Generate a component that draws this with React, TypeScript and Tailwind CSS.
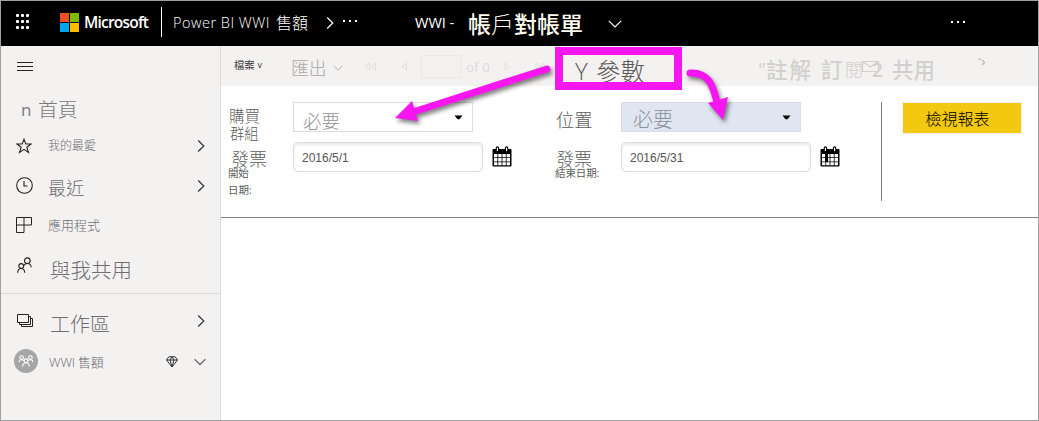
import React from 'react';

const cjk = "font-['Open_Sans','Noto_Sans_CJK_TC',sans-serif]";

function Chevron({ className, dir = 'right' }: { className: string; dir?: 'right' | 'down' }) {
  return (
    <svg className={`shrink-0 ${className}`} viewBox={dir === 'right' ? '0 0 8 12' : '0 0 14 8'} fill="none" stroke="currentColor" strokeWidth="1.2">
      <path d={dir === 'right' ? 'M1.2 .5L6.8 6L1.2 11.5' : 'M.8 .8L7 7L13.2 .8'} />
    </svg>
  );
}

function Dots({ className }: { className: string }) {
  return (
    <span className={`flex shrink-0 gap-[4px] ${className}`}>
      <i className="size-[2px] bg-white" />
      <i className="size-[2px] bg-white" />
      <i className="size-[2px] bg-white" />
    </span>
  );
}

function Header() {
  return (
    <header className="flex h-[45px] shrink-0 bg-black text-white">
      <div className="mt-[13px] ml-[15px] grid h-[15px] w-[15px] shrink-0 grid-cols-3 content-between justify-between">
        {Array.from({ length: 9 }, (_, i) => (
          <i key={i} className="size-[3px] rounded-[1px] bg-white" />
        ))}
      </div>
      <div className="mt-[12px] ml-[29px] grid size-[19px] shrink-0 grid-cols-2 gap-px">
        <i className="bg-[#f25022]" />
        <i className="bg-[#7fba00]" />
        <i className="bg-[#00a4ef]" />
        <i className="bg-[#ffb900]" />
      </div>
      <span className="mt-[8px] ml-[5px] w-[69px] shrink-0 text-[15.5px] leading-[26px] font-semibold tracking-[-0.78px]">Microsoft</span>
      <i className="mt-[6px] ml-[8px] h-[30px] w-px shrink-0 bg-white" />
      <span className="mt-[9px] ml-[11px] flex w-[136px] shrink-0 text-[14px] leading-[26px] font-light whitespace-pre">
        <span className="w-[103px] text-[14.5px] tracking-[0.5px]">Power BI WWI</span>
        <span className="text-[16px]">售額</span>
      </span>
      <Chevron className="mt-[16px] ml-[17px] h-[12px] w-[8px]" />
      <Dots className="mt-[19px] ml-[9px]" />
      <span className="mt-[9px] ml-[58px] w-[53px] shrink-0 text-[14.5px] leading-[26px] whitespace-nowrap">WWI -</span>
      <span className="mt-[8px] flex w-[140px] shrink-0 text-[23px] leading-[30px] font-medium whitespace-nowrap text-[#fffdf0]">
        帳<span className="font-light">戶</span>對帳單
      </span>
      <Chevron dir="down" className="mt-[19px] h-[8px] w-[14px]" />
      <Dots className="mt-[20px] mr-[73px] ml-auto" />
    </header>
  );
}

type NavItem = {
  icon: React.ReactNode;
  label: string;
  text: string;
  row: string;
  arrow?: string;
};

const StarIcon = (
  <svg className="mt-[13px] h-[16px] w-[16px]" viewBox="0 0 16 16" fill="none" stroke="#242424" strokeWidth="1.1">
    <path d="M8 1.2L9.8 6H15L10.8 9.2L12.4 14.4L8 11.3L3.6 14.4L5.2 9.2L1 6H6.2Z" />
  </svg>
);
const ClockIcon = (
  <svg className="mt-[11px] h-[17px] w-[17px]" viewBox="0 0 17 17" fill="none" stroke="#242424" strokeWidth="1.1">
    <circle cx="8.5" cy="8.5" r="7.8" />
    <path d="M8 4V9H11.5" />
  </svg>
);
const AppsIcon = (
  <svg className="mt-[11px] h-[16px] w-[16px]" viewBox="0 0 16 16" fill="none" stroke="#242424" strokeWidth="1">
    <path d="M.5 .5H15.5V8H.5ZM.5 8V15.5H8V.5" />
  </svg>
);
const PeopleIcon = (
  <svg className="mt-[10px] ml-[1px] h-[17px] w-[15px]" viewBox="0 0 15 17" fill="none" stroke="#242424" strokeWidth="1.1">
    <circle cx="10.3" cy="3.7" r="2.8" />
    <circle cx="4.2" cy="9" r="2.4" />
    <path d="M.6 15.8C.8 13 2.3 11.5 4.2 11.5S7.6 13 7.8 15.8M6.7 8.8C7.5 7.3 8.8 6.5 10.3 6.5C12.5 6.5 14 8 14.3 10.3" />
  </svg>
);
const WorkspacesIcon = (
  <svg className="mt-[13px] ml-[1px] h-[14px] w-[17px]" viewBox="0 0 17 14" fill="none" stroke="#242424" strokeWidth="1">
    <path d="M.5 .5H11.5V8.5H.5ZM2.5 8.5V10.5H13.5V2.5H11.5M4.5 10.5V12.5H15.5V4.5H13.5" />
  </svg>
);

const items: NavItem[] = [
  { icon: StarIcon, label: '我的最愛', text: 'ml-[47px] text-[12px] mt-[9px] leading-[24px]', row: 'h-[41px]', arrow: 'mt-[15px]' },
  { icon: ClockIcon, label: '最近', text: 'ml-[47px] text-[18px] mt-[8px] leading-[28px]', row: 'h-[40px]', arrow: 'mt-[14px]' },
  { icon: AppsIcon, label: '應用程式', text: 'ml-[47px] text-[13px] mt-[6px] leading-[26px]', row: 'h-[41px]' },
  { icon: PeopleIcon, label: '與我共用', text: 'ml-[49px] text-[20.5px] mt-[8px] leading-[30px]', row: 'h-[46px]' },
];

function NavRow({ icon, label, text, row, arrow }: NavItem) {
  return (
    <li className={`flex shrink-0 ${row}`}>
      <span className="ml-[15px] w-0 shrink-0">
        <span className="flex w-[18px]">{icon}</span>
      </span>
      <span className="-ml-[15px] flex flex-1">
        <span className={`font-light whitespace-nowrap text-[#706d72] ${text}`}>{label}</span>
      </span>
      {arrow && <Chevron className={`mr-[15px] h-[12px] w-[8px] text-[#303040] ${arrow}`} />}
    </li>
  );
}

function Sidebar() {
  return (
    <nav className="flex w-[220px] shrink-0 flex-col border-r border-[#dcdcdc] bg-[#f3f2f1]">
      <div className="mt-[16px] ml-[16px] flex h-[9px] w-[16px] shrink-0 flex-col justify-between">
        <i className="h-px bg-[#242424]" />
        <i className="h-px bg-[#242424]" />
        <i className="h-px bg-[#242424]" />
      </div>
      <div className="flex h-[54px] shrink-0 pt-[23px] text-[#7a777d]">
        <span className="ml-[20px] w-[17px] text-[17px] leading-[32px]">n</span>
        <span className="text-[19.8px] leading-[32px] font-light">首頁</span>
      </div>
      <ul className="flex flex-col">
        {items.map((it) => (
          <NavRow key={it.label} {...it} />
        ))}
      </ul>
      <i className="h-px shrink-0 bg-[#dcdcdc]" />
      <ul className="mt-[7px] flex flex-col">
        <NavRow icon={WorkspacesIcon} label="工作區" text="ml-[49px] text-[20px] mt-[9px] leading-[30px]" row="h-[40px]" arrow="mt-[14px]" />
      </ul>
      <div className="flex h-[40px] shrink-0">
        <span className="mt-[8px] ml-[13px] flex size-[24px] items-center justify-center rounded-full bg-[#a6a6a6]">
          <svg className="h-[12px] w-[16px]" viewBox="0 0 16 12" fill="none" stroke="#fff" strokeWidth="1.1">
            <circle cx="3.6" cy="2.6" r="1.8" />
            <circle cx="12.4" cy="2.6" r="1.8" />
            <circle cx="8" cy="5.8" r="1.9" />
            <path d="M1 7C1.4 5.3 2.4 4.5 3.6 4.5L6 5.5M15 7C14.6 5.3 13.6 4.5 12.4 4.5L10 5.5M4.6 11.6C4.8 9 6 7.8 8 7.8S11.2 9 11.4 11.6" />
          </svg>
        </span>
        <span className="mt-[8px] ml-[11px] w-[116px] text-[13px] leading-[26px] font-light tracking-[-0.2px] whitespace-nowrap text-[#706d72]">WWI 售額</span>
        <svg className="mt-[15px] ml-px h-[12px] w-[12px] shrink-0" viewBox="0 0 12 12" fill="none" stroke="#303038" strokeWidth="1">
          <path d="M2.8 .8H9.2L11.5 4L6 11L.5 4ZM.5 4H11.5M4 4L6 11L8 4L6 .8L4 4" />
        </svg>
        <Chevron dir="down" className="mt-[17px] ml-[16px] h-[8px] w-[12px] text-[#303040]" />
      </div>
    </nav>
  );
}

function Toolbar() {
  return (
    <div className="flex h-[40px] shrink-0 bg-[#f3f2f1] whitespace-nowrap text-[#d2d0ce]">
      <span className="mt-[8px] ml-[13px] flex w-[57px] shrink-0 text-[10.3px] leading-[22px] text-[#3b3a39]">
        檔案<span className="ml-[3px] text-[9px]">v</span>
      </span>
      <span className="mt-[8px] w-[43px] shrink-0 text-[17.8px] leading-[28px] font-light text-[#aaa8a6]">匯出</span>
      <Chevron dir="down" className="mt-[19px] -ml-px h-[6px] w-[10px] text-[#aaa8a6]" />
      <svg className="mt-[16px] ml-[21px] h-[9px] w-[45px] shrink-0" viewBox="0 0 45 9" fill="none" stroke="#e1dfdd" strokeWidth="1">
        <path d="M5.5 1V8L1 4.5ZM11.5 1V8L7 4.5ZM42.5 1V8L38 4.5Z" />
      </svg>
      <i className="mt-[9px] ml-[12px] h-[23px] w-[40px] shrink-0 border border-[#eae8e6]" />
      <span className="mt-[9px] ml-[5px] w-[37px] shrink-0 text-[13.5px] leading-[24px] text-[#dddbd9]">of 0</span>
      <svg className="mt-[16px] h-[9px] w-[50px] shrink-0" viewBox="0 0 50 9" fill="none" stroke="#e1dfdd" strokeWidth="1">
        <path d="M2 1V8L6.5 4.5ZM33 1V8L37.5 4.5ZM39 1V8L43.5 4.5Z" />
      </svg>
      <span className="mt-[6px] ml-auto flex w-[177px] shrink-0 text-[21.5px] leading-[36px] font-medium">
        <span className="w-[8px] text-[20px] font-normal">&quot;</span>
        <span className="w-[55px] tracking-[2px]">註解</span>
        <span className="w-[24px]">訂</span>
        <span className="w-[18px] text-[18px] font-light">閱</span>
        <svg className="-ml-px mt-[9px] h-[12px] w-[17px] shrink-0" viewBox="0 0 17 12" fill="none" stroke="currentColor" strokeWidth="1.1">
          <path d="M.5 .5H16.5V10.5H.5ZM.5 .5L8.5 6L16.5 .5" />
        </svg>
        <span className="-ml-[7px] w-[20px] text-[19px] font-semibold">2</span>
        <span>共用</span>
      </span>
      <svg className="mt-[12px] mr-[51px] ml-[43px] h-[9px] w-[9px] shrink-0" viewBox="0 0 9 9" fill="none" stroke="#b8b6b4" strokeWidth="1.2">
        <path d="M1 .5L2.5 2M4 2L6.5 4.5L4 7" />
      </svg>
    </div>
  );
}

function Caret({ className }: { className: string }) {
  return (
    <svg className={`h-[5px] w-[9px] shrink-0 ${className}`} viewBox="0 0 9 5" fill="#000">
      <path d="M.5 .5H8.5L5.5 4.2H3.5Z" />
    </svg>
  );
}

function CalendarIcon({ marked }: { marked?: boolean }) {
  return (
    <svg className="mt-[4px] ml-[9px] h-[21px] w-[20px] shrink-0" viewBox="0 0 20 21">
      <path d="M1.5 3H18.5Q19.5 3 19.5 4V19.5Q19.5 20.5 18.5 20.5H1.5Q.5 20.5 .5 19.5V4Q.5 3 1.5 3Z" fill="#000" />
      <path d="M2 8H5.4V11.3H2ZM6.2 8H9.6V11.3H6.2ZM10.4 8H13.8V11.3H10.4ZM14.6 8H18V11.3H14.6ZM2 12.1H5.4V15.4H2ZM6.2 12.1H9.6V15.4H6.2ZM10.4 12.1H13.8V15.4H10.4ZM14.6 12.1H18V15.4H14.6ZM2 16.2H5.4V19.2H2ZM6.2 16.2H9.6V19.2H6.2ZM10.4 16.2H13.8V19.2H10.4ZM14.6 16.2H18V19.2H14.6Z" fill="#fff" />
      {marked && <path d="M5.2 7.5H8V16H5.2Z" fill="#000" />}
      <path d="M5.4 2V4.8M14.6 2V4.8" stroke="#000" strokeWidth="3.4" strokeLinecap="round" />
      <path d="M5.4 2V4.6M14.6 2V4.6" stroke="#fff" strokeWidth="1.2" strokeLinecap="round" />
    </svg>
  );
}

function DateField({ value, marked }: { value: string; marked?: boolean }) {
  return (
    <div className="flex">
      <div className="h-[30px] w-[190px] shrink-0 rounded-[5px] border border-[#dedede] pl-[8px] font-['Liberation_Sans'] text-[12px] leading-[31px] text-[#555] shadow-[inset_0_2px_3px_#e8e8e8]">
        {value}
      </div>
      <CalendarIcon marked={marked} />
    </div>
  );
}

function Parameters() {
  return (
    <section className="flex h-[132px] shrink-0 border-b border-[#808080] bg-white pt-[16px] text-[#5c5c5c]">
      <div className="ml-[8px] flex w-[64px] shrink-0 flex-col whitespace-nowrap">
        <span className="mt-[5px] h-[18px] text-[15.5px] leading-[18px] font-light">購買</span>
        <span className="ml-px h-[25px] text-[14.3px] leading-[18px] font-light">群組</span>
        <span className="ml-[2px] h-[18px] text-[18px] leading-[19px] font-light">發票</span>
        <span className="-ml-px h-[16px] text-[10.5px] leading-[11px] tracking-[-0.3px]">開始</span>
        <span className="-ml-px text-[10.5px] leading-[12px]">日期:</span>
      </div>
      <div className="flex w-[262px] shrink-0 flex-col">
        <div className="mb-[10px] flex h-[30px] w-[180px] border border-[#dcdcdc] text-[#929292]">
          <span className="mt-[5px] ml-[9px] w-[151px] text-[18.5px] leading-[26px] font-light">必要</span>
          <Caret className="mt-[12px]" />
        </div>
        <DateField value="2016/5/1" />
      </div>
      <div className="flex w-[66px] shrink-0 flex-col whitespace-nowrap">
        <span className="mt-[5px] ml-px h-[43px] text-[18.2px] leading-[26px] font-light">位置</span>
        <span className="ml-px h-[18px] text-[18px] leading-[19px] font-light">發票</span>
        <span className="text-[10.5px] leading-[11px] tracking-[-0.1px]">結束日期:</span>
      </div>
      <div className="flex w-[259px] shrink-0 flex-col">
        <div className="mb-[10px] flex h-[30px] w-[180px] border border-[#d9dde3] bg-[#dfe6f2] text-[#8b909a]">
          <span className="mt-[4px] ml-[11px] w-[149px] text-[20px] leading-[26px] font-light">必要</span>
          <Caret className="mt-[12px]" />
        </div>
        <DateField value="2016/5/31" marked />
      </div>
      <i className="ml-px h-[99px] w-px shrink-0 bg-[#808080]" />
      <button className="mt-px ml-[21px] h-[30px] w-[118px] shrink-0 bg-[#f2c811] pt-px pr-[9px] text-[16px] leading-[30px] font-light text-black shadow-[0_0_0_1px_#f3f2f1]">檢視報表</button>
    </section>
  );
}

function Callout() {
  return (
    <>
      <svg className="absolute top-0 left-0 h-[140px] w-full" viewBox="0 0 1039 140" fill="none">
        <g className="[filter:drop-shadow(2px_3px_2px_rgba(0,0,0,.5))]">
          <path d="M547 69L410 113" stroke="#f716f0" strokeWidth="7" strokeLinecap="round" />
          <path d="M395 118L412 101L418 121Z" fill="#f716f0" />
          <path d="M690 73C709 72 713 86 717 102" stroke="#f716f0" strokeWidth="7" strokeLinecap="round" />
          <path d="M723 120L708 103L728 97Z" fill="#f716f0" />
        </g>
      </svg>
      <div className="absolute top-[47px] left-[555px] flex h-[43px] w-[127px] overflow-hidden border-8 border-[#f716f0] bg-[#f3f2f1] whitespace-nowrap text-[#5c5a58]">
        <span className="-mt-[2px] ml-[12px] w-[21px] text-[24px] leading-[36px] font-light">Y</span>
        <span className="-mt-px text-[24.5px] leading-[36px] font-light">參數</span>
      </div>
    </>
  );
}

export default function App() {
  return (
    <div className={`relative h-[421px] w-[1039px] overflow-hidden bg-white ${cjk}`}>
      <div className="flex h-full w-full flex-col border border-[#a0a0a0]">
        <Header />
        <div className="flex min-h-0 flex-1">
          <Sidebar />
          <main className="flex min-w-0 flex-1 flex-col">
            <Toolbar />
            <Parameters />
          </main>
        </div>
      </div>
      <Callout />
    </div>
  );
}
